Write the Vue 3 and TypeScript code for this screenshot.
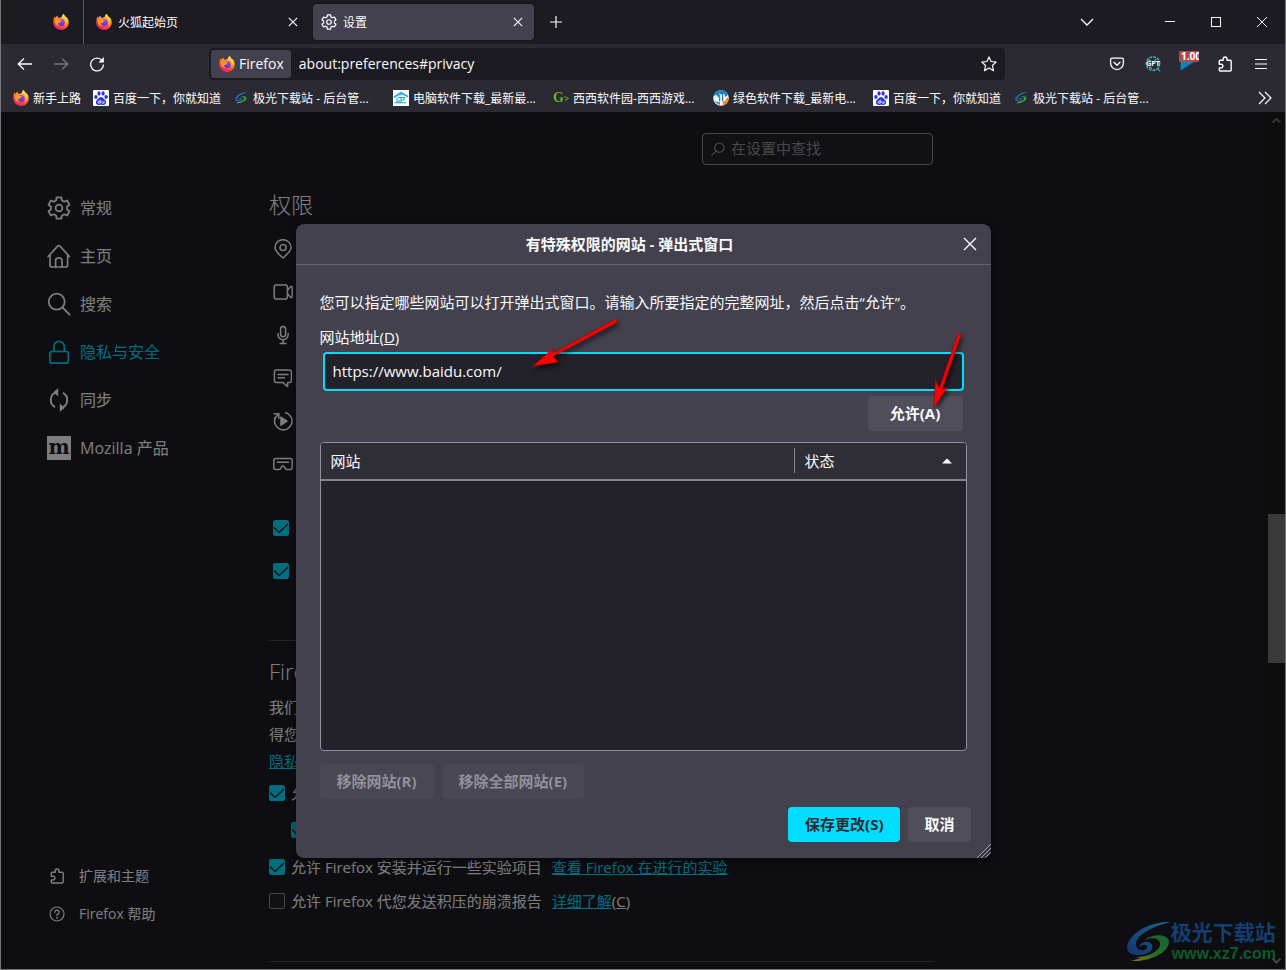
<script setup lang="ts">
import { ref } from 'vue'

interface Bookmark { icon: string; label: string; wide?: boolean }
interface NavItem { id: string; icon: string; label: string }

const bookmarks: Bookmark[] = [
  { icon: 'fox', label: '新手上路' },
  { icon: 'baidu', label: '百度一下，你就知道' },
  { icon: 'swirl', label: '极光下载站 - 后台管...', wide: true },
  { icon: 'house', label: '电脑软件下载_最新最...', wide: true },
  { icon: 'cc', label: '西西软件园-西西游戏...', wide: true },
  { icon: 'green', label: '绿色软件下载_最新电...', wide: true },
  { icon: 'baidu', label: '百度一下，你就知道' },
  { icon: 'swirl', label: '极光下载站 - 后台管...', wide: true },
]

const categories: NavItem[] = [
  { id: 'general', icon: 'gear', label: '常规' },
  { id: 'home', icon: 'home', label: '主页' },
  { id: 'search', icon: 'search', label: '搜索' },
  { id: 'privacy', icon: 'lock', label: '隐私与安全' },
  { id: 'sync', icon: 'sync', label: '同步' },
  { id: 'more', icon: 'moz', label: 'Mozilla 产品' },
]

const permissions: NavItem[] = [
  { id: 'geo', icon: 'pin', label: '位置' },
  { id: 'camera', icon: 'camera', label: '摄像头' },
  { id: 'mic', icon: 'mic', label: '麦克风' },
  { id: 'notify', icon: 'chat', label: '通知' },
  { id: 'autoplay', icon: 'autoplay', label: '自动播放' },
  { id: 'vr', icon: 'vr', label: '虚拟现实' },
]

const site = ref('https://www.baidu.com/')
const query = ref('')
const popups = ref(true)
const addons = ref(true)
const telemetry = ref(true)
const advice = ref(true)
const studies = ref(true)
const crashes = ref(false)

function gearPath(outer: number, inner: number): string {
  const pts: string[] = []
  for (let i = 0; i < 6; i++) {
    const corners: [number, number][] = [[-20, inner], [-13, outer], [13, outer], [20, inner]]
    for (const [offset, radius] of corners) {
      const a = ((i * 60 - 90 + offset) * Math.PI) / 180
      pts.push(`${(12 + radius * Math.cos(a)).toFixed(2)} ${(12 + radius * Math.sin(a)).toFixed(2)}`)
    }
  }
  return `M${pts.join('L')}Z`
}
const gear = gearPath(11, 8.2)
</script>

<template>
  <svg class="sprite" aria-hidden="true">
    <defs>
      <linearGradient id="g-flame" x1="0.8" y1="0" x2="0.3" y2="1">
        <stop offset="0" stop-color="#fff44f" />
        <stop offset="0.35" stop-color="#ffa22a" />
        <stop offset="0.7" stop-color="#ff4a3c" />
        <stop offset="1" stop-color="#f0157f" />
      </linearGradient>
      <linearGradient id="g-globe" x1="0.5" y1="0" x2="0.5" y2="1">
        <stop offset="0" stop-color="#b04ae8" />
        <stop offset="1" stop-color="#5a35c8" />
      </linearGradient>
      <linearGradient id="g-blue" x1="1" y1="0" x2="0" y2="1">
        <stop offset="0" stop-color="#17a5d8" />
        <stop offset="1" stop-color="#1c4fb4" />
      </linearGradient>
      <linearGradient id="g-green" x1="1" y1="0" x2="0" y2="1">
        <stop offset="0" stop-color="#10a04a" />
        <stop offset="0.6" stop-color="#3fae35" />
        <stop offset="1" stop-color="#e8c31a" />
      </linearGradient>
    </defs>
    <symbol id="i-fox" viewBox="0 0 16 16">
      <path fill="url(#g-flame)" d="M15.4 6.2C15 4.6 13.8 3.3 12.8 2.8L12.9 3.6C12.2 1.9 11 1.4 10.9 0C9.6.7 8.9 2 8.8 3.1C7.9 3.2 7.2 3.5 6.6 3.9C5.4 3.8 4.6 3 4.2 1.8C3.4 2.3 2.6 3 2.3 3.8C1.9 3.5 1.9 2.6 1.9 2.2C1 3.4.3 5 .3 8C.3 12.5 3.8 15.9 8 15.9C12.3 15.9 15.7 12.5 15.7 8.4C15.7 7.6 15.6 6.9 15.4 6.2Z" />
      <circle cx="8.2" cy="8.4" r="3.5" fill="url(#g-globe)" />
      <path fill="#ff9a1f" d="M1.6 7.2C2.6 4.9 5.4 4.7 6.7 5.9C7.6 6 8.7 6.1 8.9 6.5C8.7 7.2 7.9 7.4 7.3 7.7C6.4 8.3 7 9.3 5 9.1C4.6 10.4 5.6 11.6 7.2 12C4.6 12.3 2 10.4 1.6 7.2Z" />
      <path fill="#ffd53a" d="M10.9 0C9.6.7 8.9 2 8.8 3.1C11 3.3 12.6 4.9 12.8 7.4C12.9 9.3 12.4 10.5 11.8 11.2C14 9.6 14.6 6.6 12.9 3.6C12.2 1.9 11 1.4 10.9 0Z" />
    </symbol>
    <symbol id="i-baidu" viewBox="0 0 16 16">
      <rect width="16" height="16" rx="1" fill="#fff" />
      <g fill="#2a36dc">
        <ellipse cx="2.9" cy="7" rx="1.7" ry="2.1" />
        <ellipse cx="6" cy="3.4" rx="1.6" ry="2.2" />
        <ellipse cx="10.1" cy="3.4" rx="1.6" ry="2.2" />
        <ellipse cx="13.1" cy="7" rx="1.7" ry="2.1" />
        <path d="M8 7C9.8 7 10.4 8.6 11.6 9.6C14 11.4 13.2 15 10.6 15C9.4 15 8.8 14.7 8 14.7S6.6 15 5.4 15C2.8 15 2 11.4 4.4 9.6C5.6 8.6 6.2 7 8 7Z" />
      </g>
      <path d="M7.3 9.8V13.2H5.9Q4.9 13.2 4.9 12.2T5.9 11.2H7.3M8.9 11V12.5Q8.9 13.2 9.6 13.2H11V11" fill="none" stroke="#fff" stroke-width=".8" />
    </symbol>
    <symbol id="i-swirl" viewBox="0 0 44 42">
      <path fill="url(#g-blue)" d="M44 1C28 0 9 8 2 20C-3 30 3 34 12 34C20 34 27 30 25 24C23 19 14 20 12 26C17 22 21 24 20 27C18 31 9 30 9 23C9 14 26 5 44 1Z" />
      <path fill="url(#g-green)" d="M17 19C27 12 42 13 42 21C42 31 24 41 4 40L14 37L8 36C22 36 33 30 33 23C33 17 25 16 17 19Z" />
    </symbol>
    <symbol id="i-house" viewBox="0 0 16 16">
      <rect width="16" height="16" fill="#fff" />
      <g fill="none" stroke="#1aa7dc" stroke-linecap="round">
        <path stroke-width="1.6" d="M1.5 7L8 2.8L14.5 6.4" />
        <path stroke-width="1.1" d="M4.5 4.8H9M5 7.5H11.5L10.5 10M4 8.5V12.6M2 12.8H12.5M8 7.5V12.5M8 10H11M6 10V12" />
      </g>
    </symbol>
    <symbol id="i-green" viewBox="0 0 16 16">
      <circle cx="8" cy="8" r="7.8" fill="#f2f4f7" />
      <path d="M.4 7A7.7 7.7 0 0 1 15 4.8L12.5 7L11 3.5L9.5 5L6 3.2L5.5 8L3 4.6Z" fill="#1c82c6" />
      <path d="M15.7 7.6C15.8 11 13.6 14.6 9.8 15.6V11C12 12 13.6 10 13.2 8Z" fill="#f08a1c" />
      <path d="M1.5 9.5C3 12 5 12.5 7 11.5V14.8C4.6 14.8 2.4 13 1.5 9.5Z" fill="#3aa0dc" />
      <path d="M6.6 4.5V11M9.6 4V11" stroke="#1c82c6" stroke-width="1.2" />
    </symbol>
    <symbol id="i-gear" viewBox="0 0 24 24">
      <g fill="none" stroke="currentColor" stroke-width="1.8" stroke-linejoin="round">
        <path :d="gear" />
        <circle cx="12" cy="12" r="3.4" />
      </g>
    </symbol>
    <symbol id="i-home" viewBox="0 0 24 24">
      <g fill="none" stroke="currentColor" stroke-width="1.7" stroke-linejoin="round" stroke-linecap="round">
        <path d="M1.2 12.5L10.4 2.4Q11.8 1 13.2 2.4L22.4 12.5M3 11V21Q3 23 5 23H18.6Q20.6 23 20.6 21V11" />
        <path d="M8.6 23V16.5Q8.6 13.8 11.8 13.8T15 16.5V23" />
      </g>
    </symbol>
    <symbol id="i-search" viewBox="0 0 24 24">
      <g fill="none" stroke="currentColor" stroke-width="1.8" stroke-linecap="round">
        <circle cx="9.7" cy="9.7" r="8" />
        <path d="M15.5 15.5L22.6 22.6" />
      </g>
    </symbol>
    <symbol id="i-lock" viewBox="0 0 24 24">
      <g fill="none" stroke="currentColor" stroke-width="1.7">
        <rect x="2.9" y="11.5" width="18.4" height="11.6" rx="2" />
        <path d="M6.9 11.5V6.5A5.2 5.2 0 0 1 17.3 6.5V11.5" />
      </g>
    </symbol>
    <symbol id="i-sync" viewBox="0 0 24 24">
      <g fill="none" stroke="currentColor" stroke-width="1.9">
        <path d="M9.6 4.2A8.2 8.2 0 0 0 8 19.2M14.4 19.8A8.2 8.2 0 0 0 16 4.8" />
      </g>
      <path fill="currentColor" d="M6.4 4L11.2.2V8.4ZM17.6 20L12.8 23.8V15.6Z" />
    </symbol>
    <symbol id="i-pin" viewBox="0 0 20 20">
      <g fill="none" stroke="currentColor" stroke-width="1.5" stroke-linejoin="round">
        <path d="M10 19C7 16 2 12.5 2 8.5A8 7.8 0 0 1 18 8.5C18 12.5 13 16 10 19Z" />
        <circle cx="10" cy="8.6" r="3" />
      </g>
    </symbol>
    <symbol id="i-camera" viewBox="0 0 20 20">
      <g fill="none" stroke="currentColor" stroke-width="1.5" stroke-linejoin="round">
        <rect x="1.2" y="3" width="13.2" height="14" rx="2" />
        <path d="M14.4 8.4L17.4 4.8Q19.2 3.6 19.2 5.4V14.6Q19.2 16.4 17.4 15.2L14.4 11.6" />
      </g>
    </symbol>
    <symbol id="i-mic" viewBox="0 0 20 20">
      <g fill="none" stroke="currentColor" stroke-width="1.5" stroke-linecap="round">
        <rect x="7.6" y="1.4" width="5" height="10.4" rx="2.5" />
        <path d="M5 8.6V9.6A5 5 0 0 0 15.2 9.6V8.6M10.1 14.8V18.4M7.2 18.4H13" />
      </g>
    </symbol>
    <symbol id="i-chat" viewBox="0 0 20 20">
      <g fill="none" stroke="currentColor" stroke-width="1.5" stroke-linejoin="round">
        <path d="M3.4 2H16.4Q18.4 2 18.4 4V12.4Q18.4 14.4 16.4 14.4H14.6V18.6L9.8 14.4H3.4Q1.4 14.4 1.4 12.4V4Q1.4 2 3.4 2Z" />
        <path d="M5 6.4H15M5 9.8H11.4" stroke-linecap="round" />
      </g>
    </symbol>
    <symbol id="i-autoplay" viewBox="0 0 20 20">
      <path d="M12 1.6A8.7 8.7 0 1 1 2.4 6.6" fill="none" stroke="currentColor" stroke-width="1.5" />
      <path d="M7.2 6.2Q7.2 5.2 8.2 5.6L14.4 9.4Q15.4 10 14.4 10.8L8.2 14.8Q7.2 15.2 7.2 14.2Z" fill="currentColor" />
      <path d="M.6 2.8H5.8V8M5.4 3.2L1.4 7.4" fill="none" stroke="currentColor" stroke-width="1.5" />
    </symbol>
    <symbol id="i-vr" viewBox="0 0 20 20">
      <g fill="none" stroke="currentColor" stroke-width="1.5" stroke-linejoin="round">
        <path d="M2.6 4.4H17.4Q19.2 4.4 19.2 6.4V13.6Q19.2 15.6 17.4 15.6H14Q13 15.6 12.4 14.6L11.4 12.8Q10 11.4 8.6 12.8L7.6 14.6Q7 15.6 6 15.6H2.6Q.8 15.6.8 13.6V6.4Q.8 4.4 2.6 4.4Z" />
        <path d="M4.4 8.2H15.6" stroke-linecap="round" />
      </g>
    </symbol>
    <symbol id="i-puzzle" viewBox="0 0 16 16">
      <path d="M2.3 5.2Q2.3 4.2 3.3 4.2H6.2V3.2A1.9 2.2 0 0 1 10 3.2V4.2H13.2Q14.2 4.2 14.2 5.2V14Q14.2 15 13.2 15H3.3Q2.3 15 2.3 14V12H4A1.9 1.9 0 0 0 4 8.2H2.3Z" fill="none" stroke="currentColor" stroke-width="1.4" stroke-linejoin="round" />
    </symbol>
    <symbol id="i-help" viewBox="0 0 16 16">
      <g fill="none" stroke="currentColor" stroke-width="1.2" stroke-linecap="round">
        <circle cx="8" cy="8" r="7" />
        <path d="M5.9 6.2A2.1 2.1 0 1 1 8 8.3V9.4" />
      </g>
      <circle cx="8" cy="11.7" r=".9" fill="currentColor" />
    </symbol>
    <symbol id="i-close" viewBox="0 0 16 16">
      <path d="M3.8 3.8L12.2 12.2M12.2 3.8L3.8 12.2" stroke="currentColor" stroke-width="1.1" fill="none" />
    </symbol>
  </svg>

  <div class="window">
    <header class="tabs">
      <button class="view" type="button" aria-label="Firefox View"><svg class="s16"><use href="#i-fox" /></svg></button>
      <div class="tab">
        <svg class="s16"><use href="#i-fox" /></svg>
        <span class="tab-title">火狐起始页</span>
        <button type="button" class="tab-close" aria-label="关闭"><svg class="s16"><use href="#i-close" /></svg></button>
      </div>
      <div class="tab active">
        <svg class="s16"><use href="#i-gear" /></svg>
        <span class="tab-title">设置</span>
        <button type="button" class="tab-close" aria-label="关闭"><svg class="s16"><use href="#i-close" /></svg></button>
      </div>
      <button type="button" class="tool" aria-label="新建标签页">
        <svg class="s16" viewBox="0 0 16 16"><path d="M8 2V14M2 8H14" stroke="currentColor" stroke-width="1.2" /></svg>
      </button>
      <span class="fill"></span>
      <button type="button" class="all-tabs" aria-label="列出标签页">
        <svg class="s16" viewBox="0 0 16 16"><path d="M2 5L8 11L14 5" fill="none" stroke="currentColor" stroke-width="1.3" /></svg>
      </button>
      <button type="button" class="caption" aria-label="最小化"><svg class="s16" viewBox="0 0 16 16"><path d="M3 7.5H13" stroke="currentColor" /></svg></button>
      <button type="button" class="caption" aria-label="最大化"><svg class="s16" viewBox="0 0 16 16"><rect x="3.5" y="3.5" width="9" height="9" fill="none" stroke="currentColor" /></svg></button>
      <button type="button" class="caption" aria-label="关闭窗口"><svg class="s16" viewBox="0 0 16 16"><path d="M3 3L13 13M13 3L3 13" stroke="currentColor" /></svg></button>
    </header>

    <div class="toolbar">
      <button type="button" class="tool" aria-label="后退"><svg class="s16" viewBox="0 0 16 16"><path d="M15 8H1.5M7 2.5L1.3 8L7 13.5" fill="none" stroke="currentColor" stroke-width="1.3" /></svg></button>
      <button type="button" class="tool off" aria-label="前进" disabled><svg class="s16" viewBox="0 0 16 16"><path d="M1 8H14.5M9 2.5L14.7 8L9 13.5" fill="none" stroke="currentColor" stroke-width="1.3" /></svg></button>
      <button type="button" class="tool" aria-label="刷新"><svg class="s16" viewBox="0 0 16 16"><path d="M13.2 4.6A6.4 6.4 0 1 0 14.5 8.6" fill="none" stroke="currentColor" stroke-width="1.3" /><path d="M14.9 1V6.4H9.4Z" fill="currentColor" /></svg></button>
      <span class="spring"></span>
      <div class="urlbar">
        <button type="button" class="identity"><svg class="s16"><use href="#i-fox" /></svg>Firefox</button>
        <input class="url" type="text" aria-label="地址栏" value="about:preferences#privacy">
        <button type="button" class="star" aria-label="添加书签"><svg class="s16" viewBox="0 0 16 16"><path d="M8 .9L10.1 5.5L15.2 6.1L11.4 9.5L12.5 14.7L8 12.1L3.5 14.7L4.6 9.5L.8 6.1L5.9 5.5Z" fill="none" stroke="currentColor" stroke-width="1.2" stroke-linejoin="round" /></svg></button>
      </div>
      <span class="spring"></span>
      <button type="button" class="tool" aria-label="Pocket"><svg class="s16" viewBox="0 0 16 16"><g fill="none" stroke="currentColor" stroke-width="1.3" stroke-linejoin="round" stroke-linecap="round"><path d="M3 2.2H13Q14.4 2.2 14.4 3.6V7A6.4 6.6 0 0 1 1.6 7V3.6Q1.6 2.2 3 2.2Z" /><path d="M5 6.3L8 9.2L11 6.3" /></g></svg></button>
      <button type="button" class="tool" aria-label="GPT"><svg class="s16" viewBox="0 0 16 16"><circle cx="8" cy="7.6" r="6.8" fill="#17323c" stroke="#74b8c4" stroke-width="1.2" stroke-dasharray="3 1" /><path d="M12 12L15 15.4M4 3.6L6 5M11 3L9.5 5M4 11L7 12.5" stroke="#2aa6c4" stroke-width="1.4" /><text x="8" y="10" text-anchor="middle" class="gpt">GPT</text></svg></button>
      <button type="button" class="tool speed" aria-label="播放速度 1.00"><svg class="s20" viewBox="0 0 20 20"><path d="M1.5 6V19.5L17 10V7Z" fill="#0a86c4" stroke="#17516c" /><rect x="0" y="0" width="20" height="11" rx="1" fill="#b04a4c" /><text x="2" y="9" class="rate">1.00</text></svg></button>
      <button type="button" class="tool" aria-label="扩展"><svg class="s16"><use href="#i-puzzle" /></svg></button>
      <button type="button" class="tool" aria-label="菜单"><svg class="s16" viewBox="0 0 16 16"><path d="M2 3.5H14M2 8H14M2 12.5H14" stroke="currentColor" stroke-width="1.2" /></svg></button>
    </div>

    <nav class="bookmarks" aria-label="书签">
      <a v-for="(b, i) in bookmarks" :key="i" href="#" :class="{ wide: b.wide }">
        <span v-if="b.icon === 'cc'" class="cc">G<svg viewBox="0 0 5 5"><path d="M.5.5L4.5 2.5L1 4.2" fill="none" stroke="currentColor" /></svg></span>
        <svg v-else class="s16" :class="{ inset: b.icon === 'swirl' }"><use :href="'#i-' + b.icon" /></svg>
        <span class="bm-title">{{ b.label }}</span>
      </a>
      <span class="fill"></span>
      <button type="button" class="more" aria-label="更多书签"><svg class="s16" viewBox="0 0 16 16"><path d="M2 2L8 8L2 14M8 2L14 8L8 14" fill="none" stroke="currentColor" stroke-width="1.2" /></svg></button>
    </nav>

    <div class="page">
      <aside class="side">
        <nav class="cats" aria-label="设置分类">
          <a v-for="c in categories" :key="c.id" :href="'#' + c.id" :class="{ selected: c.id === 'privacy' }">
            <span v-if="c.icon === 'moz'" class="moz">m</span>
            <svg v-else class="s24"><use :href="'#i-' + c.icon" /></svg>{{ c.label }}
          </a>
        </nav>
        <nav class="foot" aria-label="帮助">
          <a href="#addons"><svg class="s16"><use href="#i-puzzle" /></svg>扩展和主题</a>
          <a href="#help"><svg class="s16"><use href="#i-help" /></svg>Firefox 帮助</a>
        </nav>
      </aside>

      <main class="main">
        <div class="find">
          <label for="find" aria-label="在设置中查找"><svg class="s14 flip"><use href="#i-search" /></svg></label>
          <input id="find" v-model="query" type="text" placeholder="在设置中查找">
        </div>
        <h2>权限</h2>
        <ul class="perms">
          <li v-for="p in permissions" :key="p.id"><svg class="s20" role="img" :aria-label="p.label"><use :href="'#i-' + p.icon" /></svg></li>
        </ul>
        <div class="blocks">
          <label><input v-model="popups" type="checkbox" aria-label="阻止弹出式窗口"></label>
          <label><input v-model="addons" type="checkbox" aria-label="网站尝试安装附加组件时警告您"></label>
        </div>
        <hr class="gap">
        <h2 class="data-title">Firefox 数据收集与使用</h2>
        <p>我们力图为您提供选择权<br>得您同意后收集信息<br><a href="#notice">隐私声明</a></p>
        <div class="checks">
          <div class="row"><label><input v-model="telemetry" type="checkbox">允许 Firefox 发送技术信息</label></div>
          <div class="row nested"><label><input v-model="advice" type="checkbox" aria-label="允许 Firefox 提供个性化扩展推荐"></label></div>
          <div class="row"><label><input v-model="studies" type="checkbox">允许 Firefox 安装并运行一些实验项目</label><a href="#studies">查看 Firefox 在进行的实验</a></div>
          <div class="row"><label><input v-model="crashes" type="checkbox">允许 Firefox 代您发送积压的崩溃报告</label><span><a href="#crash">详细了解</a>(<u>C</u>)</span></div>
        </div>
        <hr class="end">
      </main>

      <div class="scrollbar" aria-hidden="true">
        <svg class="s16" viewBox="0 0 16 16"><path d="M4.5 10.5L8.5 7L12.5 10.5" fill="none" stroke="#6d6d6d" stroke-width="2" /></svg>
        <span class="above"></span>
        <span class="thumb"></span>
        <span class="below"></span>
        <svg class="s16" viewBox="0 0 16 16"><path d="M4.5 5.5L8.5 9.5L12.5 5.5" fill="none" stroke="#8a8a8a" stroke-width="2" /></svg>
      </div>

      <div class="overlay">
        <section class="dialog" role="dialog" aria-labelledby="dlg-title">
          <header class="dlg-head">
            <h3 id="dlg-title">有特殊权限的网站 - 弹出式窗口</h3>
            <button type="button" class="dlg-close" aria-label="关闭"><svg class="s20" viewBox="0 0 20 20"><path d="M4 4L16 16M16 4L4 16" stroke="currentColor" stroke-width="1.4" /></svg></button>
          </header>
          <form class="dlg-body" @submit.prevent>
            <p class="desc">您可以指定哪些网站可以打开弹出式窗口。请输入所要指定的完整网址，然后点击“允许”。</p>
            <label class="addr" for="site">网站地址(<u>D</u>)</label>
            <input id="site" v-model="site" type="text" class="site">
            <div class="allow"><button type="button" class="btn">允许(A)</button></div>
            <div class="list">
              <table>
                <thead>
                  <tr>
                    <th scope="col">网站</th>
                    <th scope="col" class="status"><span>状态<svg class="sort" viewBox="0 0 10 6"><path d="M0 5.5L5 .5L10 5.5Z" fill="currentColor" /></svg></span></th>
                  </tr>
                </thead>
              </table>
            </div>
            <div class="removals">
              <button type="button" class="btn roomy" disabled>移除网站(R)</button>
              <button type="button" class="btn roomy" disabled>移除全部网站(E)</button>
            </div>
            <div class="actions">
              <button type="submit" class="btn roomy primary">保存更改(S)</button>
              <button type="button" class="btn">取消</button>
            </div>
          </form>
          <svg class="grip" viewBox="0 0 14 14" aria-hidden="true"><path d="M0 14L14 0M4 14L14 4M8 14L14 8M12 14L14 12" stroke="#a0a0a8" /><path d="M2 14L14 2M6 14L14 6M10 14L14 10" stroke="#26252e" /></svg>
          <svg class="arrows" viewBox="0 0 695 634" aria-hidden="true">
            <g fill="#f00" stroke="#a80000" stroke-width=".6">
              <path d="M319.8 95L321.4 98.2L257.2 132.2L262.2 138.2L237 142L257 124.6L256.6 129.4Z" />
              <path d="M662.2 109.6L665.2 110.4L646.2 165.6L651.6 163.6L638 183L639.4 155.6L643.2 164.2Z" />
            </g>
          </svg>
        </section>
      </div>

      <div class="mark" aria-hidden="true">
        <svg class="mark-logo"><use href="#i-swirl" /></svg>
        <div><strong>极光下载站</strong><em>www.xz7.com</em></div>
      </div>
    </div>
  </div>
</template>

<style>
body { background: #1c1b22; }
</style>

<style scoped>
* { box-sizing: border-box; }
.sprite { position: absolute; width: 0; height: 0; }
.window {
  display: flex; flex-direction: column; min-height: 100vh;
  border: 1px solid #77777a; border-top: 0;
  background: #1c1b22; color: #fbfbfe;
  font: 15px/20px "Open Sans", "Noto Sans CJK SC", sans-serif;
}
svg { display: block; flex: none; }
button, input { font: inherit; color: inherit; margin: 0; }
button { border: 0; padding: 0; background: none; }
a { color: #00ddff; }
.s14 { width: 14px; height: 14px; }
.s16 { width: 16px; height: 16px; }
.s20 { width: 20px; height: 20px; }
.s24 { width: 24px; height: 24px; }
.inset { padding: 2px; }
.fill { flex: 1; }

.tabs { display: flex; align-items: center; height: 44px; font-size: 12px; }
.view { align-self: stretch; width: 83px; padding-left: 52px; border-right: 1px solid #5b5b66; }
.tab { display: flex; align-items: center; gap: 6px; flex: 0 1 221px; height: 36px; padding: 0 8px; border-radius: 4px; margin-right: 4px; }
.view + .tab { margin-left: 4px; }
.tab.active { background: #42414d; box-shadow: 0 0 3px rgba(0, 0, 0, .5); }
.tab-title { flex: 1; padding-top: 2px; white-space: nowrap; }
.tool { display: grid; place-items: center; width: 36px; height: 32px; }
.all-tabs { padding: 8px; margin-right: 44px; }
.caption { display: grid; place-items: center; width: 46px; height: 44px; }

.toolbar { display: flex; align-items: center; height: 40px; padding: 0 6px; background: #2b2a33; }
.off { color: #77767e; }
.spring { flex: 0 1 94px; }
.urlbar { display: flex; align-items: center; flex: 1; height: 32px; padding: 0 8px 0 2px; border-radius: 4px; background: #1c1b22; font-size: 14px; }
.identity { display: flex; align-items: center; gap: 4px; height: 28px; padding: 0 7px 0 8px; border-radius: 3px; background: #42414d; }
.url { flex: 1; min-width: 0; padding: 0 8px; border: 0; outline: 0; background: none; }
.gpt { font: bold 7px "Open Sans", sans-serif; fill: #fff; }
.rate { font: bold 10px "Open Sans", sans-serif; fill: #fff; }
.speed { padding-bottom: 6px; }

.bookmarks { display: flex; align-items: center; gap: 12px; height: 28px; padding: 0 12px; background: #2b2a33; font-size: 12px; }
.bookmarks a { display: flex; align-items: center; gap: 4px; color: inherit; text-decoration: none; white-space: nowrap; }
.bookmarks a.wide { width: 148px; }
.bm-title { padding-top: 2px; }
.cc { display: flex; align-items: center; width: 16px; color: #5fb52c; font: bold 14px/16px "Liberation Serif", serif; }
.cc svg { width: 5px; height: 5px; }

.page { position: relative; display: flex; flex: 1; }
.side { display: flex; flex-direction: column; justify-content: space-between; width: 268px; padding: 72px 0 36px 46px; }
.side a { display: flex; align-items: center; color: inherit; text-decoration: none; }
.cats a { gap: 9px; height: 48px; font-size: 16px; }
.cats a.selected { color: #00ddff; }
.moz { width: 24px; height: 24px; background: #fbfbfe; color: #1c1b22; font: bold 20px/22px "DejaVu Serif", serif; text-align: center; }
.foot a { gap: 14px; height: 38px; padding-left: 2px; font-size: 14px; }

.main { flex: 0 1 664px; min-width: 0; padding: 21px 0 7px; }
.find { display: flex; align-items: center; gap: 6px; width: 231px; height: 32px; margin-left: auto; padding: 0 8px; border: 1px solid #8f8f9d; border-radius: 4px; background: #23222b; }
.find input { flex: 1; min-width: 0; border: 0; padding: 0 0 2px; outline: 0; background: none; }
.find input::placeholder { color: #8f8f96; opacity: 1; }
.flip { transform: scaleX(-1); color: #a0a0a8; }
h2 { margin: 24px 0 0; font-size: 22px; line-height: 30px; font-weight: 300; }
.perms { margin: 8px 0 0; padding: 0 0 0 4px; list-style: none; }
.perms li { display: flex; align-items: center; height: 43px; }
.blocks { margin-top: 22px; padding-left: 4px; }
.blocks label { display: flex; height: 43px; padding-top: 13px; }
input[type="checkbox"] {
  appearance: none; flex: none; width: 16px; height: 16px;
  border: 1px solid #8f8f9d; border-radius: 2px; background: #23222b;
}
input[type="checkbox"]:checked {
  border-color: #00ddff;
  background: #00ddff url("data:image/svg+xml,%3Csvg xmlns='http://www.w3.org/2000/svg' viewBox='0 0 14 14'%3E%3Cpath d='M0 6.5L5 11.5L14 3' fill='none' stroke='%232b2a33' stroke-width='1.5'/%3E%3C/svg%3E");
}
hr { height: 1px; margin: 0; border: 0; background: #48474f; }
.gap { margin-top: 47px; }
.end { margin-top: 43px; }
.data-title { margin-top: 15px; }
.main p { margin: 8px 0 1px; line-height: 27px; white-space: nowrap; }
.row { display: flex; align-items: center; gap: 10px; height: 34px; }
.row label { display: flex; align-items: center; gap: 6px; white-space: nowrap; }
.row.nested { margin: 3px 0; padding-left: 22px; }

.scrollbar { display: flex; flex-direction: column; width: 17px; margin-left: auto; background: #1a1a1a; }
.above { flex: 386 1 0; }
.thumb { flex: 149 1 0; background: #757575; }
.below { flex: 290 1 0; }

.overlay { position: absolute; inset: 0; display: flex; align-items: center; justify-content: center; background: rgba(0, 0, 0, .5); }
.dialog { position: relative; width: 100%; max-width: 695px; border-radius: 8px; background: #42414d; box-shadow: 0 2px 8px rgba(0, 0, 0, .5); overflow: hidden; }
.dlg-head { display: flex; align-items: center; height: 41px; padding: 0 11px 0 4px; border-bottom: 1px solid #65646f; }
h3 { flex: 1; margin: 0; font-size: 15px; font-weight: 700; text-align: center; }
.dlg-body { padding: 23px 24px 16px; }
.desc { margin: 0 0 7px; line-height: 28px; }
.addr { display: block; margin-bottom: 1px; line-height: 28px; }
.site { display: block; width: calc(100% - 6px); height: 39px; margin: 0 3px; padding: 0 8px; border: 2px solid #00ddff; border-radius: 4px; outline: 0; background: #23222b; }
.allow { display: flex; justify-content: flex-end; margin: 5px 4px 11px 0; }
.allow .btn { min-width: 95px; }
.btn { height: 35px; padding: 0 16px; border-radius: 4px; background: #4f4e59; font-weight: 700; }
.btn.roomy { padding: 0 17px; }
.btn:disabled { background: #484752; color: #918f9a; }
.btn.primary { background: #00ddff; color: #2b2a33; }
.list { min-height: 309px; border: 1px solid #8f8f9d; border-radius: 4px; background: #23222b; overflow: hidden; }
table { width: 100%; border-collapse: collapse; background: #2f2e37; }
thead tr { height: 37px; border-bottom: 2px solid #85848c; }
th { padding: 0 10px; font-weight: 400; text-align: left; }
.status { width: 172px; padding: 0; }
.status span { display: flex; align-items: center; justify-content: space-between; height: 25px; padding: 0 14px 0 10px; border-left: 1px solid #85848c; }
.sort { width: 10px; height: 6px; }
.removals { display: flex; gap: 8px; margin-top: 13px; }
.actions { display: flex; justify-content: flex-end; gap: 8px; margin: 8px -4px 0 0; }
.grip { position: absolute; right: 0; bottom: 0; width: 14px; height: 14px; }
.arrows { position: absolute; left: 0; top: 0; width: 695px; height: 634px; pointer-events: none; filter: drop-shadow(2px 3px 2px rgba(0, 0, 0, .6)); }

.mark { position: absolute; right: 9px; bottom: 5px; display: flex; align-items: center; }
.mark-logo { width: 44px; height: 42px; opacity: .6; }
.mark strong, .mark em { display: block; white-space: nowrap; }
.mark strong { color: #123f73; font-size: 21px; line-height: 24px; }
.mark em { padding-left: 1px; color: #0d5a2b; font: bold 16px/20px "Liberation Sans", sans-serif; }
</style>
